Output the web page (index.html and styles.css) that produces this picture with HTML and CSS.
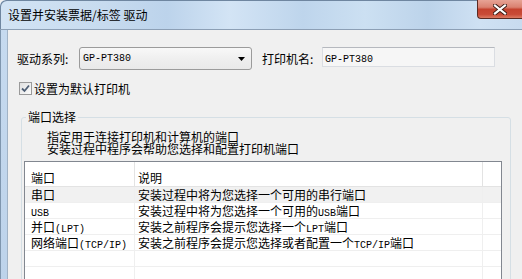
FILE: index.html
```html
<!DOCTYPE html>
<html lang="zh-CN">
<head>
<meta charset="utf-8">
<title>设置并安装票据/标签 驱动</title>
<link rel="stylesheet" href="styles.css">
</head>
<body>
<div class="window">
  <div class="titlebar">
    <span class="title">设置并安装票据/标签 驱动</span>
    <div class="close">
      <svg width="14" height="11" viewBox="0 0 14 11">
        <path d="M2 1.5 L12 9.5 M12 1.5 L2 9.5" stroke="#3a1a14" stroke-width="4" stroke-linecap="square"/>
        <path d="M2 1.5 L12 9.5 M12 1.5 L2 9.5" stroke="#ffffff" stroke-width="2.2" stroke-linecap="square"/>
      </svg>
    </div>
  </div>
  <div class="frame">
    <div class="side"></div>
    <div class="content">
      <div class="row1">
        <span class="lbl lbl1">驱动系列:</span>
        <div class="combo">
          <span class="mono">GP-PT380</span>
          <svg class="arrow" width="7" height="4" viewBox="0 0 7 4"><path d="M0 0 H7 L3.5 4 Z" fill="#000"/></svg>
        </div>
        <span class="lbl lbl2">打印机名:</span>
        <div class="textbox"><span class="mono">GP-PT380</span></div>
      </div>
      <div class="check-row">
        <span class="checkbox">
          <svg width="9" height="9" viewBox="0 0 9 9"><path d="M1 4.5 L3.5 7 L8 1.5" fill="none" stroke="#4f5f75" stroke-width="1.8"/></svg>
        </span>
        <span class="check-label">设置为默认打印机</span>
      </div>
      <fieldset class="group">
        <legend>端口选择</legend>
        <div class="desc">
          <div class="desc-line">指定用于连接打印机和计算机的端口</div>
          <div class="desc-line">安装过程中程序会帮助您选择和配置打印机端口</div>
        </div>
        <div class="list">
          <div class="lrow head"><div class="c1">端口</div><div class="c2">说明</div><div class="c3"></div></div>
          <div class="lrow sel"><div class="c1">串口</div><div class="c2">安装过程中将为您选择一个可用的串行端口</div><div class="c3"></div></div>
          <div class="lrow"><div class="c1"><span class="mono">USB</span></div><div class="c2">安装过程中将为您选择一个可用的<span class="mono">USB</span>端口</div><div class="c3"></div></div>
          <div class="lrow"><div class="c1">并口<span class="mono">(LPT)</span></div><div class="c2">安装之前程序会提示您选择一个<span class="mono">LPT</span>端口</div><div class="c3"></div></div>
          <div class="lrow"><div class="c1">网络端口<span class="mono">(TCP/IP)</span></div><div class="c2">安装之前程序会提示您选择或者配置一个<span class="mono">TCP/IP</span>端口</div><div class="c3"></div></div>
          <div class="lrow"><div class="c1"></div><div class="c2"></div><div class="c3"></div></div>
          <div class="lrow"><div class="c1"></div><div class="c2"></div><div class="c3"></div></div>
        </div>
      </fieldset>
    </div>
  </div>
</div>
</body>
</html>
```

FILE: styles.css
```css
html, body {
  margin: 0;
  padding: 0;
  width: 522px;
  height: 279px;
  overflow: hidden;
  background: #f0f0f0;
}

.window {
  width: 522px;
  height: 279px;
  overflow: hidden;
  font-family: "Noto Sans CJK SC", "Noto Sans", sans-serif;
  font-size: 12px;
  color: #000;
  display: flex;
  flex-direction: column;
  border-top-left-radius: 6px;
  background: #c5d9ee;
}

.titlebar {
  height: 29px;
  flex: none;
  display: flex;
  align-items: center;
  padding-left: 8px;
  border-bottom: 1px solid #8c9fb5;
  border-top-left-radius: 6px;
  box-shadow: inset 1px 1px 0 #6f86a0;
  background: linear-gradient(90deg, #d2e3f4 0%, #c7dbef 20%, #bcd3eb 32%, #d3e4f5 44%, #bed5ec 58%, #cce0f2 70%, #bcd3ea 82%, #cfe1f3 92%, #c8dbef 100%);
}

.title {
  line-height: 16px;
  color: #000;
}

.close {
  margin-left: auto;
  align-self: flex-start;
  width: 45px;
  height: 19px;
  box-sizing: border-box;
  border: 1px solid #5b2a22;
  border-top: none;
  border-right: none;
  border-bottom-left-radius: 4px;
  background: linear-gradient(#e7a395 0%, #da8170 40%, #c5432f 52%, #c94a36 80%, #dc7a62 100%);
  display: flex;
  align-items: center;
  justify-content: center;
}

.frame {
  flex: 1;
  display: flex;
}

.side {
  width: 7px;
  flex: none;
  background: linear-gradient(#c6daef, #bcd2ea);
  border-right: 1px solid #a1b3c6;
  box-shadow: inset 1px 0 0 #7f96ae;
}

.content {
  flex: 1;
  background: #f0f0f0;
  padding: 17px 0 0 9px;
}

.mono {
  font-family: "Liberation Mono", monospace;
  font-size: 10px;
}

.row1 {
  display: flex;
  align-items: flex-start;
  height: 23px;
}

.lbl {
  line-height: 23px;
  white-space: nowrap;
}

.lbl1 {
  width: 62px;
}

.lbl2 {
  width: 60px;
  margin-left: 10px;
}

.combo {
  width: 173px;
  height: 23px;
  box-sizing: border-box;
  border: 1px solid #9b9b9b;
  border-radius: 3px;
  background: linear-gradient(#f8f8f8, #efefef 50%, #e9e9e9);
  display: flex;
  align-items: center;
  padding: 0 6px 0 3px;
  line-height: 21px;
}

.combo .arrow {
  margin-left: auto;
}

.textbox {
  width: 173px;
  height: 20px;
  box-sizing: border-box;
  border: 1px solid #dadde2;
  border-top-color: #b5b8be;
  background: #f6f6f6;
  padding-left: 2px;
  line-height: 18px;
}

.check-row {
  margin-top: 12px;
  display: flex;
  align-items: center;
  height: 13px;
}

.checkbox {
  width: 13px;
  height: 13px;
  box-sizing: border-box;
  margin-left: 2px;
  border: 1px solid #9a9a9a;
  background: linear-gradient(135deg, #e0e0e0, #fbfbfb);
  display: flex;
  align-items: center;
  justify-content: center;
}

.check-label {
  margin-left: 2px;
  line-height: 13px;
}

.group {
  margin: 16px 0 0 4px;
  width: 490px;
  box-sizing: border-box;
  padding: 0;
  border: 1px solid #d5dfe5;
  border-radius: 3px;
  min-width: 0;
  height: 200px;
}

.group legend {
  margin-left: 4px;
  padding: 0 2px;
  line-height: 12px;
  font-size: 12px;
}

.desc {
  margin: 7px 0 0 25px;
  white-space: nowrap;
}

.desc-line {
  line-height: 13px;
  height: 12px;
}

.list {
  margin: 7px 0 0 2px;
  width: 478px;
  box-sizing: border-box;
  border: 1px solid #828790;
  background: #fff;
  height: 140px;
}

.lrow {
  display: flex;
  height: 16px;
  box-sizing: border-box;
  border-bottom: 1px solid #efefef;
  line-height: 15px;
  white-space: nowrap;
}

.lrow.head {
  height: 25px;
  padding-top: 8px;
  border-bottom: 1px solid #e3e3e3;
}

.lrow.sel {
  background: #f1f1f1;
}

.c1 {
  width: 110px;
  box-sizing: border-box;
  padding-left: 6px;
  border-right: 1px solid #efefef;
  flex: none;
}

.c2 {
  width: 348px;
  box-sizing: border-box;
  padding-left: 3px;
  border-right: 1px solid #efefef;
  flex: none;
  overflow: hidden;
}

.c3 {
  flex: 1;
}

.head .c1,
.head .c2 {
  border-right-color: #e3e3e3;
  margin-top: -8px;
  padding-top: 8px;
}
```
